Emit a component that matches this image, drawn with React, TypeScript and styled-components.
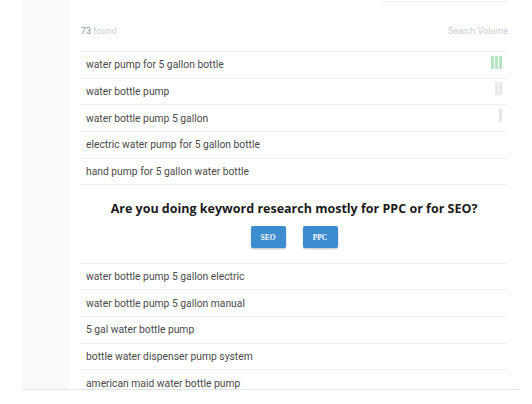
import React from "react"
import styled, { createGlobalStyle } from "styled-components"

const GlobalStyle = createGlobalStyle`
  html, body {
    margin: 0;
    padding: 0;
    background: #ffffff;
  }
  body {
    font-family: Roboto, "Liberation Sans", Arial, sans-serif;
    overflow: hidden;
  }
`

const Frame = styled.div`
  display: flex;
  margin-left: 22px;
  width: 497px;
  height: 390px;
  box-sizing: border-box;
  border-bottom: 1px solid #dfe5ec;
  overflow: hidden;
`

const Sidebar = styled.aside`
  width: 47px;
  flex-shrink: 0;
  background: #f9f9f9;
`

const Main = styled.main`
  flex: 1;
  display: flex;
  flex-direction: column;
  padding: 0 11px;
  min-width: 0;

  & > * {
    flex-shrink: 0;
  }
`

const SearchBox = styled.div`
  align-self: flex-end;
  width: 126px;
  height: 28px;
  margin-top: -27px;
  background: #ffffff;
  border-radius: 2px;
  box-shadow: 0 1px 1px rgba(0, 0, 0, 0.07);
`

const Header = styled.div`
  display: flex;
  justify-content: space-between;
  align-items: center;
  padding: 24px 0 14px 1px;
  font-size: 9px;
  line-height: 12px;
  color: #c9cdd2;
`

const Count = styled.span`
  color: #8f959d;
`

const Row = styled.div`
  display: flex;
  align-items: center;
  justify-content: space-between;
  height: 26.67px;
  box-sizing: border-box;
  border-top: 1px solid #eeeeee;
  padding: 0 6px 0 6px;
`

const Keyword = styled.span`
  font-size: 10.3px;
  color: #4a4a4a;
  white-space: nowrap;
`

const Bars = styled.div`
  display: flex;
  gap: 1px;
  align-self: flex-start;
  margin-top: 3.5px;
`

const Bar = styled.span<{ $tone: "green" | "gray" }>`
  width: 3px;
  height: 13px;
  background: ${p => (p.$tone === "green" ? "#b5e5c1" : "#e4e7ea")};
`

const Prompt = styled.section`
  display: flex;
  flex-direction: column;
  align-items: center;
  height: 78.3px;
  box-sizing: border-box;
  border-top: 1px solid #eeeeee;
  padding-top: 16px;
`

const Question = styled.h2`
  margin: 0;
  font-family: "Open Sans", "Liberation Sans", sans-serif;
  font-weight: 700;
  font-size: 12.5px;
  line-height: 16px;
  color: #1b1b1b;
`

const Choices = styled.div`
  display: flex;
  gap: 17px;
  margin-top: 9px;
`

const Choice = styled.button`
  width: 35px;
  height: 22px;
  padding: 0;
  border: none;
  border-radius: 2px;
  background: #3d8cd0;
  box-shadow: 0 1px 2px rgba(0, 0, 0, 0.25);
  color: #ffffff;
  font-family: "Liberation Serif", serif;
  font-weight: 700;
  font-size: 7.5px;
  cursor: pointer;
`

type Item = { text: string; level?: number; tone?: "green" | "gray" }

const top: Item[] = [
  { text: "water pump for 5 gallon bottle", level: 3, tone: "green" },
  { text: "water bottle pump", level: 2, tone: "gray" },
  { text: "water bottle pump 5 gallon", level: 1, tone: "gray" },
  { text: "electric water pump for 5 gallon bottle" },
  { text: "hand pump for 5 gallon water bottle" },
]

const bottom: Item[] = [
  { text: "water bottle pump 5 gallon electric" },
  { text: "water bottle pump 5 gallon manual" },
  { text: "5 gal water bottle pump" },
  { text: "bottle water dispenser pump system" },
  { text: "american maid water bottle pump" },
]

function KeywordRow({ item }: { item: Item }) {
  return (
    <Row>
      <Keyword>{item.text}</Keyword>
      {item.level ? (
        <Bars>
          {Array.from({ length: item.level }).map((_, i) => (
            <Bar key={i} $tone={item.tone || "gray"} />
          ))}
        </Bars>
      ) : null}
    </Row>
  )
}

export default function App() {
  return (
    <>
      <GlobalStyle />
      <Frame>
        <Sidebar />
        <Main>
          <SearchBox />
          <Header>
            <span>
              <Count>73</Count> found
            </span>
            <span>Search Volume</span>
          </Header>
          {top.map(item => (
            <KeywordRow key={item.text} item={item} />
          ))}
          <Prompt>
            <Question>Are you doing keyword research mostly for PPC or for SEO?</Question>
            <Choices>
              <Choice>SEO</Choice>
              <Choice>PPC</Choice>
            </Choices>
          </Prompt>
          {bottom.map(item => (
            <KeywordRow key={item.text} item={item} />
          ))}
        </Main>
      </Frame>
    </>
  )
}
